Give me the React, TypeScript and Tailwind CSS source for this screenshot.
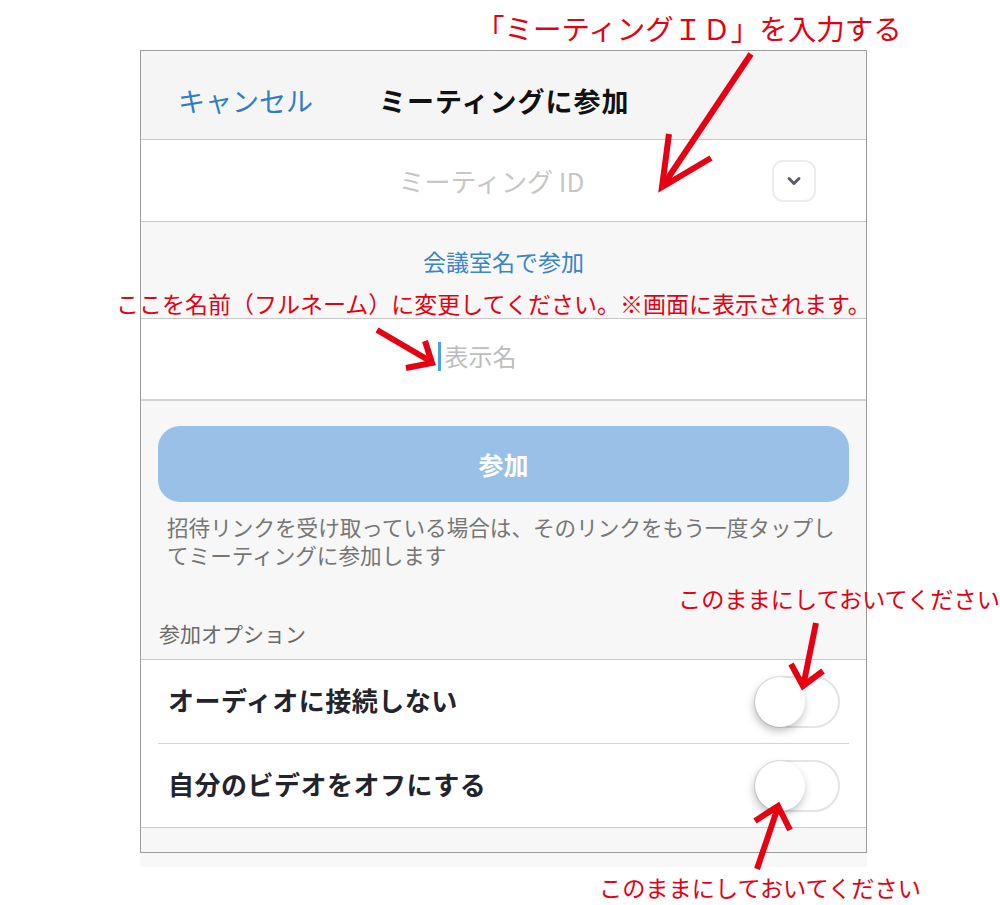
import React from "react";

const Toggle = () => (
    <div className="w-[86px] h-[52px] rounded-full border-2 border-[#e4e4e4] bg-white flex items-center">
        <div className="w-[50px] h-[50px] -ml-[1px] rounded-full bg-white shadow-[-1px_4px_8px_rgba(0,0,0,0.26)]" />
    </div>
);

const OptionRow = (props: { label: string }) => (
    <div className="h-[83px] flex items-center justify-between pl-[27px] pr-[26px]">
        <span className="text-[26px] leading-[34px] tracking-[0.5px] font-bold text-[#24242c] -mt-[4px]">{props.label}</span>
        <Toggle />
    </div>
);

const Arrows = () => (
    <svg className="absolute inset-0 pointer-events-none" width="1000" height="905" viewBox="0 0 1000 905">
        <g fill="none" stroke="#e60012" strokeWidth="6" strokeLinecap="butt" strokeLinejoin="miter">
            {/* meeting id */}
            <line x1="751" y1="54" x2="664" y2="184" />
            <polyline points="669,134 662,187 711,158" />
            {/* display name */}
            <line x1="377" y1="330" x2="430" y2="361" />
            <polyline points="406,368 432,363 425,341" />
            {/* toggles */}
            <line x1="816" y1="623" x2="804" y2="682" />
            <polyline points="791,664 803,686 823,671" />
            <line x1="757" y1="869" x2="777" y2="810" />
            <polyline points="755,821 778,806 790,830" />
        </g>
    </svg>
);

export default function App() {
    return (
        <div className="relative w-[1000px] h-[905px] bg-white overflow-hidden font-['Noto_Sans_CJK_JP','Noto_Sans',sans-serif]">
            <div className="pt-[50px] pl-[140px]">
                <div className="w-[727px] border border-[#9c9c9c] bg-[#f7f7f7]">
                    {/* header */}
                    <div className="h-[89px] bg-[#f5f5f5] border-b border-[#c9c9c9] flex items-center pl-[37px] pt-[12px]">
                        <span className="text-[27px] leading-[36px] text-[#2f7dc4]">キャンセル</span>
                        <span className="ml-[66px] text-[27px] leading-[36px] tracking-[1px] font-bold text-[#111]">ミーティングに参加</span>
                    </div>
                    {/* meeting id */}
                    <div className="h-[82px] bg-white border-b border-[#c9c9c9] flex items-center">
                        <div className="flex-1 pl-[70px] text-center text-[26px] leading-[34px] text-[#c6c6c6]">ミーティング ID</div>
                        <div className="w-[44px] h-[42px] mr-[50px] rounded-[11px] border-2 border-[#ececf1] bg-white flex items-center justify-center">
                            <svg width="16" height="10" viewBox="0 0 16 10">
                                <path d="M3 2.5L8 7.5L13 2.5" fill="none" stroke="#5d5d6b" strokeWidth="3" strokeLinecap="round" strokeLinejoin="round" />
                            </svg>
                        </div>
                    </div>
                    {/* room name */}
                    <div className="h-[97px] border-b border-[#c9c9c9] pt-[24px] text-center">
                        <span className="text-[23px] leading-[30px] text-[#3a84c8]">会議室名で参加</span>
                    </div>
                    {/* display name */}
                    <div className="h-[82px] bg-white border-b-2 border-[#d2d2d2] flex items-center justify-center pr-[53px] pb-[6px]">
                        <div className="w-[3px] h-[29px] bg-[#4aa3e0] mr-[4px]" />
                        <span className="text-[24px] leading-[32px] text-[#bdbdbd]">表示名</span>
                    </div>
                    {/* join */}
                    <div className="pt-[25px] pb-[12px]">
                        <div className="mx-[17px] h-[76px] rounded-[22px] bg-[#99c0e7] flex items-center justify-center">
                            <span className="text-[25px] leading-[34px] font-bold text-white">参加</span>
                        </div>
                        <div className="mt-[11px] pl-[26px] text-[21.6px] leading-[28px] text-[#767676] whitespace-nowrap">
                            <div>招待リンクを受け取っている場合は、そのリンクをもう一度タップし</div>
                            <div>てミーティングに参加します</div>
                        </div>
                        <div className="mt-[50px] pl-[18px] text-[21px] leading-[28px] text-[#6a6a6a]">参加オプション</div>
                    </div>
                    {/* options */}
                    <div className="bg-white border-t border-[#c9c9c9] border-b">
                        <OptionRow label="オーディオに接続しない" />
                        <div className="mx-[17px] h-px bg-[#d4d4d4]" />
                        <OptionRow label="自分のビデオをオフにする" />
                    </div>
                    <div className="h-[24px]" />
                </div>
                <div className="w-[727px] h-[14px] bg-[#f8f8f8]" />
            </div>

            {/* annotations */}
            <div className="absolute left-[476px] top-[11px] text-[28.5px] leading-[34px] text-[#e60012] whitespace-nowrap">「ミーティングＩＤ」を入力する</div>
            <div className="absolute left-[116px] top-[288px] text-[23px] leading-[30px] text-[#e60012] whitespace-nowrap">ここを名前（フルネーム）に変更してください。※画面に表示されます。</div>
            <div className="absolute left-[678px] top-[583px] text-[23.2px] leading-[30px] text-[#e60012] whitespace-nowrap">このままにしておいてください</div>
            <div className="absolute left-[599px] top-[872px] text-[23.2px] leading-[30px] text-[#e60012] whitespace-nowrap">このままにしておいてください</div>

            <Arrows />
        </div>
    );
}
